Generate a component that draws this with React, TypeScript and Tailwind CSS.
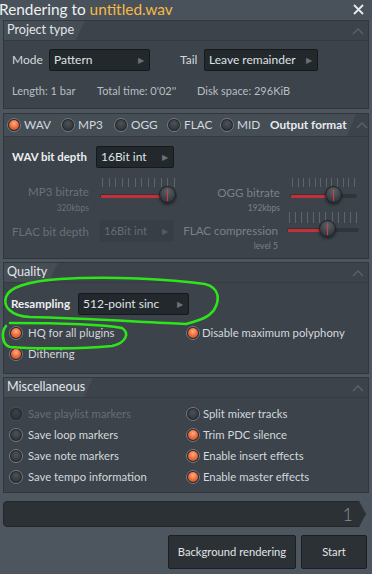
import type { ReactNode } from 'react';

function Radio({ on, dim }: { on?: boolean; dim?: boolean }) {
  return (
    <span
      className={`relative inline-flex w-[14px] h-[14px] shrink-0 items-center justify-center rounded-full border ${
        dim ? 'border-[#4a5057]' : 'border-[#767c83]'
      } bg-[#23272b]`}
    >
      {on ? (
        <span className="w-[10px] h-[10px] rounded-full bg-[radial-gradient(circle_at_50%_35%,#ffb08a_0%,#f0703f_45%,#c94520_100%)]" />
      ) : (
        <span
          className={`w-[10px] h-[10px] rounded-full ${
            dim
              ? 'bg-[radial-gradient(circle_at_50%_35%,#3c4146_0%,#2b2f33_100%)]'
              : 'bg-[radial-gradient(circle_at_50%_35%,#4c5258_0%,#2a2e32_100%)]'
          }`}
        />
      )}
    </span>
  );
}

function Dropdown({ text, w, dim }: { text: string; w: string; dim?: boolean }) {
  return (
    <div
      className={`${w} h-[22px] shrink-0 flex items-center justify-between pl-[4px] pr-[5px] rounded-[2px] border ${
        dim ? 'border-[#3a4047] bg-[#383e45] text-[#666c73]' : 'border-[#16191c] bg-[#23282d] text-[#dfe2e5]'
      }`}
    >
      <span>{text}</span>
      <span className={`text-[8px] ${dim ? 'text-[#555b62]' : 'text-[#6a7077]'}`}>▶</span>
    </div>
  );
}

function Slider({ pct, w, tickH = 9 }: { pct: number; w: number; tickH?: number }) {
  const knob = (w - 16) * pct;
  return (
    <div className="relative h-[32px]" style={{ width: w }}>
      <div className="absolute left-[2px] right-[2px] top-0 flex justify-between" style={{ height: tickH }}>
        {Array.from({ length: 12 }).map((_, i) => (
          <span key={i} className="w-px h-full bg-[#5d646b]" />
        ))}
      </div>
      <div className="absolute left-0 right-0 top-[16px] h-[4px] rounded-full bg-[#2f353a]" />
      <div className="absolute left-[1px] top-[17px] h-[3px] bg-[#c4303a]" style={{ width: knob + 4 }} />
      <div
        className="absolute top-[8px] w-[17px] h-[17px] rounded-full border border-[#1d2125] bg-[radial-gradient(circle_at_50%_30%,#5a6168_0%,#3a4046_60%,#2b3035_100%)] shadow-[0_2px_3px_rgba(0,0,0,0.45)] flex justify-center"
        style={{ left: knob }}
      >
        <span className="w-px h-[12px] mt-[2px] bg-[#d83a40]" />
      </div>
    </div>
  );
}

function Chevron() {
  return (
    <svg width="12" height="8" viewBox="0 0 12 8" className="shrink-0">
      <path d="M1 7 L6 2 L11 7" fill="none" stroke="#5c636a" strokeWidth="1.3" />
    </svg>
  );
}

function Panel({
  title,
  tabW,
  children,
  h,
  headH = 'h-[19px]',
}: {
  title: ReactNode;
  tabW: string;
  children: ReactNode;
  h: string;
  headH?: string;
}) {
  return (
    <div className={`mx-[3px] ${h} border border-[#30363c] bg-[#3c434a] flex flex-col`}>
      <div className={`${headH} flex items-stretch justify-between bg-[#3c434a]`}>
        <div
          className={`${tabW} flex items-center pl-[3px] pr-[10px] bg-[#454d55] [clip-path:polygon(0_0,100%_0,calc(100%-9px)_100%,0_100%)]`}
        >
          {title}
        </div>
        <div className="flex items-center pr-[4px]">
          <Chevron />
        </div>
      </div>
      <div className="flex-1 border-t border-[#353b41]">{children}</div>
    </div>
  );
}

export default function App() {
  return (
    <div className="relative w-[372px] h-[574px] overflow-hidden bg-[#4d565f] text-[11.3px] text-[#d3d8dc] [font-family:'Lato','Roboto',sans-serif] leading-none whitespace-nowrap">
      {/* title bar */}
      <div className="h-[19px] flex items-center justify-between pr-[8px] bg-[#49525b]">
        <div className="text-[15.4px] -ml-[1px] text-[#eef0f2]">
          Rendering to <span className="text-[#f7b944]">untitled.wav</span>
        </div>
        <svg width="11" height="11" viewBox="0 0 11 11">
          <path d="M1 1 L10 10 M10 1 L1 10" stroke="#e8eaec" strokeWidth="1.8" />
        </svg>
      </div>

      <div className="flex flex-col pt-[1px]">
        {/* Project type */}
        <Panel title={<span className="text-[12.6px] text-[#e3e6e9]">Project type</span>} tabW="w-[81px]" h="h-[89px]">
          <div className="flex items-center pt-[8px] pl-[8px] text-[12px]">
            <span className="w-[37px]">Mode</span>
            <Dropdown text="Pattern" w="w-[101px]" />
            <span className="ml-[30px] w-[24px]">Tail</span>
            <Dropdown text="Leave remainder" w="w-[114px]" />
          </div>
          <div className="flex items-center pt-[14px] pl-[8px] text-[11px] text-[#b9bec3]">
            <span className="w-[85px]">Length: 1 bar</span>
            <span className="w-[100px]">Total time: 0'02''</span>
            <span>Disk space: 296KiB</span>
          </div>
        </Panel>

        {/* Output format */}
        <div className="mt-[4px]">
          <Panel
            headH="h-[22px]"
            title={
              <div className="flex items-center text-[11.8px]">
                <Radio on />
                <span className="ml-[3px] w-[37px]">WAV</span>
                <Radio />
                <span className="ml-[3px] w-[36px]">MP3</span>
                <Radio />
                <span className="ml-[3px] w-[36px]">OGG</span>
                <Radio />
                <span className="ml-[3px] w-[36px]">FLAC</span>
                <Radio />
                <span className="ml-[3px] w-[33px]">MID</span>
                <span className="font-bold text-[11.8px] text-[#e8ebee]">Output format</span>
              </div>
            }
            tabW="w-[352px]"
            h="h-[146px]"
          >
            <div className="flex items-center pt-[9px] pl-[8px] text-[12px]">
              <span className="w-[84px] font-bold text-[11.4px] text-[#eceff2]">WAV bit depth</span>
              <Dropdown text="16Bit int" w="w-[78px]" />
            </div>
            <div className="flex items-start pt-[10px]">
              <div className="w-[85px] flex flex-col items-end pt-[8px] text-[#6b7177]">
                <span className="text-[11.6px]">MP3 bitrate</span>
                <span className="text-[8.5px] mt-[6px]">320kbps</span>
              </div>
              <div className="ml-[11px]">
                <Slider pct={0.97} w={77} />
              </div>
              <div className="w-[103px] flex flex-col items-end pt-[9px] text-[#7b8187]">
                <span className="text-[11.6px]">OGG bitrate</span>
                <span className="text-[8.5px] mt-[5px]">192kbps</span>
              </div>
              <div className="ml-[10px]">
                <Slider pct={0.68} w={67} />
              </div>
            </div>
            <div className="flex items-start pt-[8px]">
              <div className="w-[92px] pl-[8px] pt-[6px] text-[11.6px] text-[#6b7177]">FLAC bit depth</div>
              <div className="ml-[3px]">
                <Dropdown text="16Bit int" w="w-[75px]" dim />
              </div>
              <div className="w-[104px] flex flex-col items-end pt-[5px] text-[#7b8187]">
                <span className="text-[11.6px]">FLAC compression</span>
                <span className="text-[8.5px] mt-[5px]">level 5</span>
              </div>
              <div className="ml-[9px] -mt-[8px]">
                <Slider pct={0.57} w={72} tickH={11} />
              </div>
            </div>
          </Panel>
        </div>

        {/* Quality */}
        <div className="mt-[3px]">
          <Panel title={<span className="text-[12.6px] text-[#e3e6e9]">Quality</span>} tabW="w-[54px]" h="h-[112px]">
            <div className="flex items-center pt-[10px] pl-[7px] text-[12px]">
              <span className="w-[67px] font-bold text-[11.6px] text-[#eceff2]">Resampling</span>
              <Dropdown text="512-point sinc" w="w-[111px]" />
            </div>
            <div className="grid grid-cols-[177px_1fr] gap-y-[7px] pt-[11px] pl-[5px]">
              <div className="flex items-center gap-[5px]">
                <Radio on />
                <span>HQ for all plugins</span>
              </div>
              <div className="flex items-center gap-[2px]">
                <Radio on />
                <span>Disable maximum polyphony</span>
              </div>
              <div className="flex items-center gap-[5px]">
                <Radio on />
                <span>Dithering</span>
              </div>
            </div>
          </Panel>
        </div>

        {/* Miscellaneous */}
        <div className="mt-[3px]">
          <Panel title={<span className="text-[12.6px] text-[#e3e6e9]">Miscellaneous</span>} tabW="w-[89px]" h="h-[116px]">
            <div className="grid grid-cols-[177px_1fr] gap-y-[7px] pt-[9px] pl-[5px]">
              <div className="flex items-center gap-[5px] text-[#686e74]">
                <Radio dim />
                <span>Save playlist markers</span>
              </div>
              <div className="flex items-center gap-[3px]">
                <Radio />
                <span>Split mixer tracks</span>
              </div>
              <div className="flex items-center gap-[5px]">
                <Radio />
                <span>Save loop markers</span>
              </div>
              <div className="flex items-center gap-[3px]">
                <Radio on />
                <span>Trim PDC silence</span>
              </div>
              <div className="flex items-center gap-[5px]">
                <Radio />
                <span>Save note markers</span>
              </div>
              <div className="flex items-center gap-[3px]">
                <Radio on />
                <span>Enable insert effects</span>
              </div>
              <div className="flex items-center gap-[5px]">
                <Radio />
                <span>Save tempo information</span>
              </div>
              <div className="flex items-center gap-[3px]">
                <Radio on />
                <span>Enable master effects</span>
              </div>
            </div>
          </Panel>
        </div>
      </div>

      {/* progress */}
      <div className="mt-[8px] ml-[3px] w-[363px] h-[26px] flex items-center justify-end pr-[12px] bg-[#2c3136] border border-[#23272b] rounded-l-[4px] [clip-path:polygon(0_0,calc(100%-7px)_0,100%_50%,calc(100%-7px)_100%,0_100%)] text-[18px] text-[#858b91] font-light">
        1
      </div>

      {/* buttons */}
      <div className="flex justify-end gap-[5px] pr-[5px] mt-[8px] text-[11.2px] text-[#e1e4e7]">
        <button className="w-[128px] h-[34px] bg-[#2c3136] border border-[#1c2024] rounded-[2px]">Background rendering</button>
        <button className="w-[66px] h-[34px] bg-[#2c3136] border border-[#1c2024] rounded-[2px]">Start</button>
      </div>

      {/* hand-drawn annotation */}
      <svg className="absolute inset-0 pointer-events-none" width="372" height="574" viewBox="0 0 372 574">
        <path
          d="M60 279 C110 276 170 279 205 284 C220 288 220 300 214 310 C208 318 200 320 186 324 C140 322 80 318 30 317 C10 316 3 306 6 297 C9 287 30 281 60 279"
          fill="none"
          stroke="#2ee51a"
          strokeWidth="2.6"
          strokeLinecap="round"
        />
        <path
          d="M10 323 C50 323 100 324 122 328 C130 333 126 343 112 346 C80 349 30 349 10 347 C2 345 1 332 6 326"
          fill="none"
          stroke="#2ee51a"
          strokeWidth="2.6"
          strokeLinecap="round"
        />
      </svg>
    </div>
  );
}
